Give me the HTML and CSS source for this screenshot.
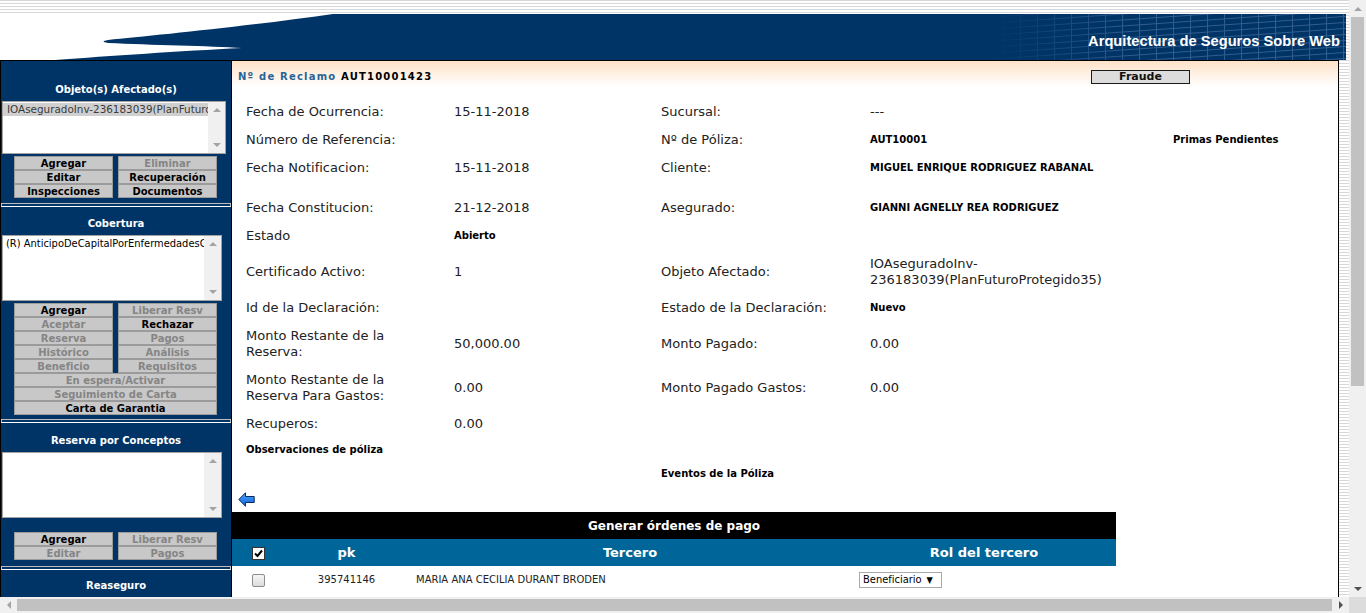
FILE: index.html
```html
<!DOCTYPE html>
<html lang="es">
<head>
<meta charset="utf-8">
<title>Arquitectura de Seguros Sobre Web</title>
<link rel="stylesheet" href="styles.css">
</head>
<body>
<div class="screen">
  <div class="viewport">
    <div class="page">
      <header class="banner">
        <svg class="banner-art" width="1346" height="46" viewBox="0 0 1346 46">
          <defs>
            <pattern id="grid" width="17" height="6" patternUnits="userSpaceOnUse" patternTransform="skewY(-4)">
              <path d="M0 0.5H17M0.5 0V6" stroke="#3a6596" stroke-width="1" fill="none"/>
            </pattern>
            <linearGradient id="fade" x1="0" x2="1" y1="0" y2="0">
              <stop offset="0" stop-color="#fff" stop-opacity="0"/>
              <stop offset="0.4" stop-color="#fff" stop-opacity="1"/>
            </linearGradient>
            <mask id="fademask"><rect x="990" y="0" width="356" height="46" fill="url(#fade)"/></mask>
          </defs>
          <rect width="1346" height="46" fill="#003366"/>
          <rect x="990" y="0" width="356" height="46" fill="url(#grid)" mask="url(#fademask)" opacity="0.85"/>
          <path d="M0 0H333C250 12 150 22 108 26Q99 27.6 108 29C150 31 210 32 242 34C180 37 110 42 55 46H0Z" fill="#fff"/>
        </svg>
        <span class="brand">Arquitectura de Seguros Sobre Web</span>
      </header>
      <div class="body">
        <aside class="sidebar">
          <div class="sec-title t1">Objeto(s) Afectado(s)</div>
          <div class="listbox wide l1">
            <div class="list-items"><div class="opt sel">IOAseguradoInv-236183039(PlanFuturoPr</div></div>
            <div class="list-scroll"><span class="tri-up"></span><span class="tri-down"></span></div>
          </div>
          <div class="btns b1">
            <div class="btn">Agregar</div><div class="btn off">Eliminar</div>
            <div class="btn">Editar</div><div class="btn">Recuperación</div>
            <div class="btn">Inspecciones</div><div class="btn">Documentos</div>
          </div>
          <div class="sep s1"></div>

          <div class="sec-title t2">Cobertura</div>
          <div class="listbox l2">
            <div class="list-items"><div class="opt plain">(R) AnticipoDeCapitalPorEnfermedadesGr</div></div>
            <div class="list-scroll"><span class="tri-up"></span><span class="tri-down"></span></div>
          </div>
          <div class="btns b2">
            <div class="btn">Agregar</div><div class="btn off">Liberar Resv</div>
            <div class="btn off">Aceptar</div><div class="btn">Rechazar</div>
            <div class="btn off">Reserva</div><div class="btn off">Pagos</div>
            <div class="btn off">Histórico</div><div class="btn off">Análisis</div>
            <div class="btn off">Beneficio</div><div class="btn off">Requisitos</div>
            <div class="btn off full">En espera/Activar</div>
            <div class="btn off full">Seguimiento de Carta</div>
            <div class="btn full">Carta de Garantia</div>
          </div>
          <div class="sep s2"></div>

          <div class="sec-title t3">Reserva por Conceptos</div>
          <div class="listbox l3">
            <div class="list-items"></div>
            <div class="list-scroll"><span class="tri-up"></span><span class="tri-down"></span></div>
          </div>
          <div class="btns b3">
            <div class="btn">Agregar</div><div class="btn off">Liberar Resv</div>
            <div class="btn off">Editar</div><div class="btn off">Pagos</div>
          </div>
          <div class="sep s3"></div>

          <div class="sec-title t4">Reaseguro</div>
        </aside>

        <main class="panel">
          <div class="titlebar">
            <div class="claim">Nº de Reclamo <b>AUT10001423</b></div>
            <div class="fraude">Fraude</div>
          </div>

          <div class="fields">
            <div class="row">
              <div>Fecha de Ocurrencia:</div><div>15-11-2018</div><div>Sucursal:</div><div>---</div><div></div>
            </div>
            <div class="row">
              <div>Número de Referencia:</div><div></div><div>Nº de Póliza:</div><div class="b">AUT10001</div><div class="b">Primas Pendientes</div>
            </div>
            <div class="row">
              <div>Fecha Notificacion:</div><div>15-11-2018</div><div>Cliente:</div><div class="b nowrap">MIGUEL ENRIQUE RODRIGUEZ RABANAL</div><div></div>
            </div>
            <div class="row gap">
              <div>Fecha Constitucion:</div><div>21-12-2018</div><div>Asegurado:</div><div class="b nowrap">GIANNI AGNELLY REA RODRIGUEZ</div><div></div>
            </div>
            <div class="row">
              <div>Estado</div><div class="b">Abierto</div><div></div><div></div><div></div>
            </div>
            <div class="row tall">
              <div>Certificado Activo:</div><div>1</div><div>Objeto Afectado:</div><div class="nowrap">IOAseguradoInv-<br>236183039(PlanFuturoProtegido35)</div><div></div>
            </div>
            <div class="row">
              <div>Id de la Declaración:</div><div></div><div>Estado de la Declaración:</div><div class="b">Nuevo</div><div></div>
            </div>
            <div class="row tall">
              <div>Monto Restante de la Reserva:</div><div>50,000.00</div><div>Monto Pagado:</div><div>0.00</div><div></div>
            </div>
            <div class="row tall">
              <div>Monto Restante de la Reserva Para Gastos:</div><div>0.00</div><div>Monto Pagado Gastos:</div><div>0.00</div><div></div>
            </div>
            <div class="row">
              <div>Recuperos:</div><div>0.00</div><div></div><div></div><div></div>
            </div>
            <div class="row short">
              <div class="b nowrap">Observaciones de póliza</div><div></div><div></div><div></div><div></div>
            </div>
            <div class="row short">
              <div></div><div></div><div class="b">Eventos de la Póliza</div><div></div><div></div>
            </div>
          </div>

          <div class="back">
            <svg width="17" height="15" viewBox="0 0 17 15">
              <defs>
                <linearGradient id="arrowfill" x1="0" x2="0" y1="0" y2="1">
                  <stop offset="0" stop-color="#4ea3ff"/>
                  <stop offset="1" stop-color="#0b62d6"/>
                </linearGradient>
              </defs>
              <path d="M0.8 7.5L7.5 0.8V4.5H16.2V10.5H7.5V14.2Z" fill="url(#arrowfill)" stroke="#0a2a5c" stroke-width="1" stroke-linejoin="round"/>
            </svg>
          </div>

          <table class="orders">
            <colgroup><col class="c1"><col class="c2"><col class="c3"><col class="c4"></colgroup>
            <thead>
              <tr class="cap"><th colspan="4">Generar órdenes de pago</th></tr>
              <tr class="head">
                <th><span class="chk on"><svg width="11" height="11" viewBox="0 0 11 11"><path d="M2 5.5L4.5 8L9 2.5" fill="none" stroke="#000" stroke-width="2"/></svg></span></th>
                <th>pk</th>
                <th>Tercero</th>
                <th>Rol del tercero</th>
              </tr>
            </thead>
            <tbody>
              <tr class="data">
                <td class="cb"><span class="chk"></span></td>
                <td class="pk">395741146</td>
                <td class="name">MARIA ANA CECILIA DURANT BRODEN</td>
                <td class="role"><span class="select">Beneficiario<span class="caret">▼</span></span></td>
              </tr>
            </tbody>
          </table>
        </main>
      </div>
    </div>
  </div>

  <div class="vscroll">
    <div class="sb-btn"><span class="tri-up light"></span></div>
    <div class="vs-thumb"></div>
    <div class="sb-fill"></div>
    <div class="sb-btn"><span class="tri-down dark"></span></div>
  </div>
  <div class="hscroll">
    <div class="sb-btn h"><span class="tri-left"></span></div>
    <div class="hs-thumb"></div>
    <div class="sb-btn h"><span class="tri-right"></span></div>
  </div>
  <div class="corner"></div>
</div>
</body>
</html>
```
FILE: styles.css
```css
* { box-sizing: border-box; }
html, body { margin: 0; padding: 0; }
body {
  width: 1366px;
  height: 613px;
  overflow: hidden;
  font-family: "DejaVu Sans", Verdana, sans-serif;
  color: #222;
}

.screen {
  display: grid;
  grid-template-columns: 1349px 17px;
  grid-template-rows: 597px 16px;
  width: 1366px;
  height: 613px;
}

.viewport {
  overflow: hidden;
  background: repeating-linear-gradient(to bottom, #d8d8d8 0, #d8d8d8 1px, #ffffff 1px, #ffffff 3px);
}
.page { padding-top: 14px; }

/* banner */
.banner {
  display: grid;
  width: 1346px;
  height: 46px;
}
.banner > * { grid-area: 1 / 1; }
.banner-art { display: block; }
.brand {
  justify-self: end;
  align-self: start;
  padding: 19px 6px 0 0;
  color: #fff;
  font: bold 14.7px/17px "Liberation Sans", Arial, sans-serif;
  white-space: nowrap;
}

.body {
  display: flex;
  width: 1339px;
  height: 537px;
  overflow: hidden;
}

/* sidebar */
.sidebar {
  width: 232px;
  flex: none;
  background: #003366;
  border-top: 1px solid #000;
  border-left: 1px solid #000;
  border-right: 1px solid #000;
  display: flex;
  flex-direction: column;
}
.sec-title {
  height: 14px;
  padding-top: 1px;
  color: #fff;
  font: bold 10px/14px "DejaVu Sans", Verdana, sans-serif;
  text-align: center;
  white-space: nowrap;
}
.t1 { margin-top: 21px; }
.t2 { margin-top: 9px; }
.t3 { margin-top: 10px; }
.t4 { margin-top: 8px; }

.listbox {
  margin-left: 1px;
  width: 220px;
  height: 66px;
  border: 1px solid #a3a3a3;
  background: #fff;
  display: flex;
  margin-top: 5px;
}
.listbox.wide { width: 224px; height: 53px; }
.list-items { flex: 1; overflow: hidden; padding-top: 1px; min-width: 0; }
.opt {
  white-space: nowrap;
  overflow: hidden;
  height: 13px;
}
.opt.sel {
  padding-left: 4px;
  background: #cfcfcf;
  color: #3a3a3a;
  font: 10.4px/13px "DejaVu Sans", Verdana, sans-serif;
}
.opt.plain {
  padding-left: 3px;
  color: #000;
  font: 11px/13px "DejaVu Sans Condensed", Tahoma, sans-serif;
}
.list-scroll {
  width: 17px;
  flex: none;
  background: #f0f0f0;
  display: flex;
  flex-direction: column;
  justify-content: space-between;
  align-items: center;
  padding: 6px 0;
}

.tri-up, .tri-down, .tri-left, .tri-right { display: block; width: 0; height: 0; }
.tri-up { border-left: 4px solid transparent; border-right: 4px solid transparent; border-bottom: 4px solid #a3a3a3; }
.tri-down { border-left: 4px solid transparent; border-right: 4px solid transparent; border-top: 4px solid #a3a3a3; }
.tri-up.light { border-bottom-color: #a3a3a3; }
.tri-down.dark { border-top-color: #505050; }
.tri-left { border-top: 4px solid transparent; border-bottom: 4px solid transparent; border-right: 4px solid #a3a3a3; }
.tri-right { border-top: 4px solid transparent; border-bottom: 4px solid transparent; border-left: 4px solid #505050; }

.btns {
  display: grid;
  grid-template-columns: 99px 99px;
  column-gap: 5px;
  margin-left: 13px;
  margin-top: 2px;
}
.b3 { margin-top: 14px; }
.btn {
  height: 14px;
  padding-top: 1px;
  background: #c8c8c8;
  border: 1px solid #9b9b9b;
  font: bold 10px/12px "DejaVu Sans", Verdana, sans-serif;
  text-align: center;
  color: #000;
  white-space: nowrap;
  overflow: hidden;
}
.btn.off { color: #858585; }
.btn.full { grid-column: 1 / -1; }

.sep {
  height: 4px;
  border: 1px solid #bcbcbc;
  border-bottom-color: #ffffff;
}
.s1 { margin-top: 5px; }
.s2 { margin-top: 4px; }
.s3 { margin-top: 6px; }

/* main panel */
.panel {
  flex: 1;
  min-width: 0;
  border-top: 1px solid #000;
  border-right: 1px solid #000;
  background: linear-gradient(to bottom, #fee2c8 0px, #ffffff 26px);
}
.titlebar {
  display: grid;
  grid-template-columns: 853px 99px;
  align-items: center;
  height: 30px;
  padding: 2px 0 0 6px;
}
.claim {
  font: bold 10px/12px "DejaVu Sans", Verdana, sans-serif;
  letter-spacing: 1.2px;
  color: #2a6496;
  white-space: nowrap;
}
.claim b { color: #000; }
.fraude {
  height: 14px;
  border: 1px solid #1a1a1a;
  background: #dcdcdc;
  font: bold 11px/12px "DejaVu Sans", Verdana, sans-serif;
  text-align: center;
  color: #111;
}

.fields { margin-top: 7px; padding-left: 14px; }
.row {
  display: grid;
  grid-template-columns: 208px 207px 209px 303px 1fr;
  align-items: center;
  height: 28px;
  font: 13px/16px "DejaVu Sans", Verdana, sans-serif;
  color: #222;
}
.row > div { padding-right: 10px; }
.row > div:first-child { padding-right: 40px; }
.row.gap { margin-top: 12px; }
.row.tall { height: 44px; }
.row.short { height: 24px; }
.b {
  font: bold 10px/12px "DejaVu Sans", Verdana, sans-serif;
  color: #000;
}
.nowrap { white-space: nowrap; }

.back {
  height: 26px;
  padding-left: 6px;
  display: flex;
  align-items: center;
}
.back svg { display: block; }

/* table */
.orders {
  border-collapse: collapse;
  table-layout: fixed;
  width: 884px;
}
.c1 { width: 53px; }
.c2 { width: 123px; }
.c3 { width: 444px; }
.c4 { width: 264px; }
.orders th, .orders td { padding: 0; }
.cap th {
  background: #000;
  color: #fff;
  height: 27px;
  font: bold 12px/14px "DejaVu Sans", Verdana, sans-serif;
  text-align: center;
}
.head th {
  background: #006699;
  color: #fff;
  height: 27px;
  font: bold 13px/15px "DejaVu Sans", Verdana, sans-serif;
  text-align: center;
}
.data td {
  height: 28px;
  font: 10px/12px "DejaVu Sans", Verdana, sans-serif;
  color: #222;
}
.data .cb, .head th:first-child { text-align: center; }
.data .pk { text-align: center; }
.data .name { padding-left: 8px; white-space: nowrap; }
.data .role { padding-left: 7px; }

.chk {
  display: inline-flex;
  align-items: center;
  justify-content: center;
  width: 13px;
  height: 13px;
  vertical-align: middle;
  border: 1px solid #8c8c8c;
  border-radius: 2px;
  background: linear-gradient(#f6f6f6, #dcdcdc);
}
.chk.on {
  border: 1px solid #333;
  border-radius: 0;
  background: #fff;
}
.chk svg { display: block; }

.select {
  display: inline-flex;
  align-items: center;
  width: 83px;
  height: 16px;
  border: 1px solid #a9a9a9;
  background: #fff;
  padding-left: 3px;
  font: 11px/14px "DejaVu Sans Condensed", Tahoma, sans-serif;
  color: #000;
  vertical-align: middle;
}
.caret { font-size: 9px; margin-left: 5px; }

/* scrollbars */
.vscroll {
  background: #f0f0f0;
  display: flex;
  flex-direction: column;
  align-items: center;
}
.sb-btn {
  width: 17px;
  height: 17px;
  flex: none;
  display: flex;
  align-items: center;
  justify-content: center;
}
.sb-btn.h { height: 16px; }
.vs-thumb { width: 13px; height: 369px; background: #c1c1c1; flex: none; }
.sb-fill { flex: 1; }
.hscroll {
  background: #f0f0f0;
  display: flex;
  align-items: center;
}
.hs-thumb { width: 1315px; height: 12px; background: #c1c1c1; flex: none; }
.corner { background: #dcdcdc; }
```
